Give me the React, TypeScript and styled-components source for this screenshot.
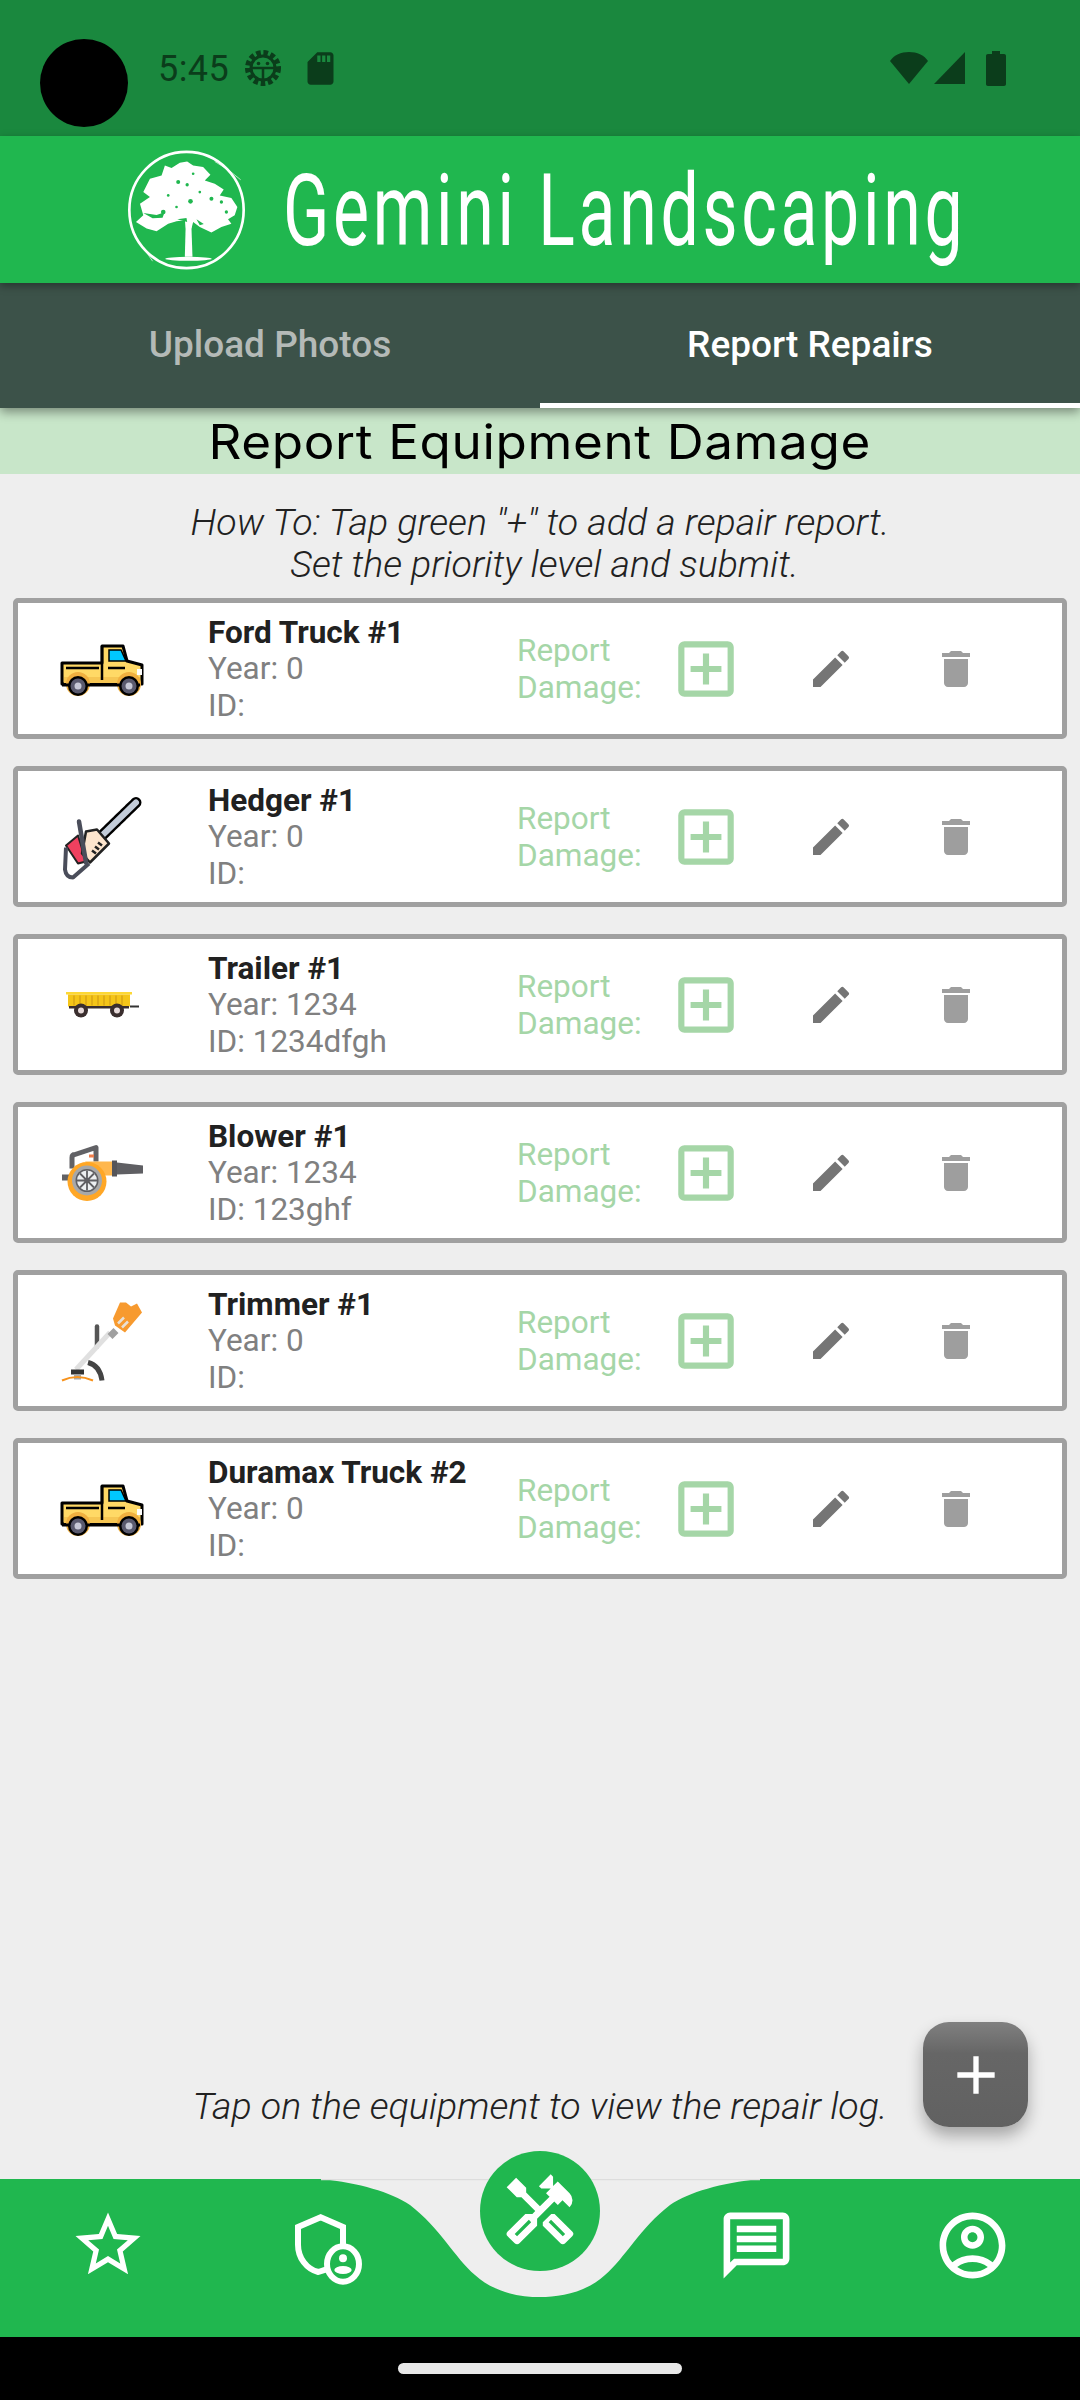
import styled, { createGlobalStyle } from "styled-components";
import {
  MdAdd,
  MdDelete,
  MdEdit,
  MdOutlineAccountCircle,
  MdOutlineAddBox,
  MdOutlineHandyman,
  MdOutlineMessage,
  MdSdCard,
  MdStarBorder,
} from "react-icons/md";

const GlobalStyle = createGlobalStyle`
  html, body {
    margin: 0;
    padding: 0;
    background: #eeeeee;
  }
  * {
    box-sizing: border-box;
  }
`;

const Screen = styled.div`
  position: relative;
  display: flex;
  flex-direction: column;
  width: 1080px;
  height: 2400px;
  overflow: hidden;
  background: #eeeeee;
  font-family: Roboto, "Liberation Sans", sans-serif;
`;

const StatusBar = styled.div`
  display: flex;
  align-items: center;
  flex: 0 0 136px;
  padding: 0 74px 0 40px;
  background: #1a883e;
  color: #0b3d1b;
`;

const Camera = styled.div`
  width: 88px;
  height: 88px;
  margin-top: 30px;
  border-radius: 50%;
  background: #000;
`;

const StatusLeft = styled.div`
  display: flex;
  align-items: center;
  margin-left: 30px;
`;

const Clock = styled.span`
  font-size: 36px;
  letter-spacing: 0.4px;
  margin: 2px 14px 0 0;
`;

const StatusRight = styled.div`
  display: flex;
  align-items: center;
  gap: 4px;
  margin-left: auto;
`;

const Header = styled.div`
  position: relative;
  z-index: 3;
  display: flex;
  align-items: center;
  flex: 0 0 147px;
  padding-left: 128px;
  background: #20b74f;
  box-shadow: 0 3px 8px rgba(0, 0, 0, 0.35);
`;

const Brand = styled.span`
  display: inline-block;
  margin: 2px 0 0 38px;
  color: #fff;
  font-size: 100px;
  font-weight: 400;
  line-height: 1;
  letter-spacing: 5.4px;
  white-space: nowrap;
  transform: scaleX(0.68);
  transform-origin: left center;
`;

const TabBar = styled.div`
  position: relative;
  z-index: 2;
  display: grid;
  grid-template-columns: 1fr 1fr;
  flex: 0 0 125px;
  background: #3c5249;
  box-shadow: 0 4px 10px rgba(0, 0, 0, 0.4);
`;

const Tab = styled.div<{ $active?: boolean }>`
  display: flex;
  align-items: center;
  justify-content: center;
  padding-top: 2px;
  font-size: 37px;
  font-weight: 500;
  color: ${(p) => (p.$active ? "#ffffff" : "#b4bab7")};
  border-bottom: 5px solid ${(p) => (p.$active ? "#ffffff" : "transparent")};
`;

const TitleBand = styled.div`
  display: flex;
  align-items: center;
  justify-content: center;
  flex: 0 0 66px;
  background: #c8e6c9;
`;

const TitleText = styled.span`
  display: inline-block;
  color: #000;
  font-family: Inter, sans-serif;
  font-size: 48px;
  font-weight: 400;
  letter-spacing: 0.6px;
  transform: scaleX(1.066);
`;

const HowTo = styled.p`
  margin: 0;
  padding: 27px 0 13px;
  text-align: center;
  color: #212121;
  font-size: 37.5px;
  font-style: italic;
  font-weight: 300;
  line-height: 42px;
`;

const EquipmentList = styled.div`
  display: flex;
  flex-direction: column;
  gap: 27px;
  margin: 0 13px;
`;

const Row = styled.div`
  display: flex;
  align-items: center;
  height: 141px;
  padding-left: 12px;
  background: #fff;
  border: 5px solid #a0a0a0;
  border-radius: 5px;
`;

const Thumb = styled.svg`
  flex: 0 0 150px;
  width: 150px;
  height: 110px;
`;

const Info = styled.div`
  flex: 0 0 309px;
  margin: 2px 0 0 28px;
  font-size: 31.5px;
  line-height: 36.5px;
  color: #808080;
`;

const Name = styled.div`
  color: #212121;
  font-weight: 700;
`;

const ReportLabel = styled.div`
  flex: 0 0 152px;
  margin-top: 2px;
  color: #a5d6a7;
  font-size: 31.5px;
  line-height: 36.5px;
`;

const IconSlot = styled.div<{ $left: number; $color: string }>`
  display: flex;
  margin-left: ${(p) => p.$left}px;
  color: ${(p) => p.$color};
`;

const Spacer = styled.div`
  flex: 1;
`;

const FooterHint = styled.p`
  margin: 0;
  padding-bottom: 52px;
  text-align: center;
  color: #212121;
  font-size: 37.5px;
  font-style: italic;
  font-weight: 300;
  line-height: 42px;
`;

const Fab = styled.div`
  position: absolute;
  left: 923px;
  top: 2022px;
  display: flex;
  align-items: center;
  justify-content: center;
  width: 105px;
  height: 105px;
  border-radius: 26px;
  background: linear-gradient(#808080 0%, #666666 30%, #616161 100%);
  color: #fff;
  box-shadow: 0 9px 16px rgba(0, 0, 0, 0.3);
`;

const BottomNav = styled.div`
  position: relative;
  display: grid;
  grid-template-columns: repeat(5, 1fr);
  flex: 0 0 158px;
  padding-top: 27px;
  background: #20b74f;
  color: #fff;
`;

const Notch = styled.svg`
  position: absolute;
  top: 0;
  left: 0;
  width: 1080px;
  height: 158px;
`;

const NavItem = styled.div`
  position: relative;
  display: flex;
  justify-content: center;
  align-items: flex-start;
  height: 80px;
`;

const CenterButton = styled.div`
  position: absolute;
  top: -55px;
  left: 48px;
  display: flex;
  align-items: center;
  justify-content: center;
  width: 120px;
  height: 120px;
  border-radius: 50%;
  background: #20b74f;
`;

const SystemBar = styled.div`
  display: flex;
  align-items: center;
  justify-content: center;
  flex: 0 0 63px;
  background: #000;
`;

const HomePill = styled.div`
  width: 284px;
  height: 11px;
  border-radius: 6px;
  background: #e8e8e8;
`;

const GearIcon = () => (
  <svg width="40" height="40" viewBox="0 0 40 40" fill="none" stroke="currentColor">
    <circle cx="20" cy="20" r="15.5" strokeWidth="5" strokeDasharray="4.6 2.7" />
    <circle cx="20" cy="20" r="12" strokeWidth="3" />
    <path d="M8 20h24M20 20v11" strokeWidth="2.5" />
    <circle cx="15.5" cy="15.5" r="1.8" fill="currentColor" stroke="none" />
    <circle cx="24.5" cy="15.5" r="1.8" fill="currentColor" stroke="none" />
  </svg>
);

const SignalIcons = () => (
  <>
    <svg width="40" height="34" viewBox="0 0 40 34" fill="currentColor">
      <path d="M20 33 1 10C5 4 12 1 20 1s15 3 19 9z" />
    </svg>
    <svg width="33" height="34" viewBox="0 0 33 34" fill="currentColor">
      <path d="M32 1v32H1z" />
    </svg>
    <svg width="20" height="35" viewBox="0 0 20 35" fill="currentColor" style={{ marginLeft: 16 }}>
      <path d="M6 0h8v3h4c1.200 0 2 .8 2 2v28c0 1.200-.8 2-2 2H2c-1.200 0-2-.8-2-2V5c0-1.200.8-2 2-2h4z" />
    </svg>
  </>
);

const TreeLogo = () => (
  <svg width="117" height="120" viewBox="84 54 352 360" style={{ flex: "0 0 117px" }}>
    <ellipse cx="260" cy="234" rx="172" ry="175" fill="none" stroke="#fff" strokeWidth="8" />
    <path d="M345 88q45 25 78 55M132 348q10 18 26 40" fill="none" stroke="#fff" strokeWidth="2" />
    <path
      fill="#fff"
      d="M195 100l20 8 25-16 22-4 18 12 30 5 22 23-17 17 30 10 27 17-12 18 35 8 18 27-8 25-20 12 10 13-30 10-30 17-35-17-20-15-5 20h-17l-3-25-25 3-25 7-35 23-30-8-32-20 22-20-10-35 30-20-20-15 20-40 35-10z"
    />
    <path fill="#fff" d="M258 262l-3 113h23l-4-113z" />
    <ellipse cx="266" cy="381" rx="70" ry="6" fill="#fff" />
    <g fill="#20b74f">
      <circle cx="235" cy="150" r="6" />
      <circle cx="262" cy="158" r="5" />
      <circle cx="205" cy="190" r="4" />
      <circle cx="300" cy="180" r="4" />
      <circle cx="335" cy="200" r="6" />
      <circle cx="272" cy="208" r="7" />
      <circle cx="230" cy="225" r="4" />
      <circle cx="365" cy="210" r="5" />
      <circle cx="380" cy="240" r="5" />
      <circle cx="190" cy="240" r="7" />
      <circle cx="280" cy="125" r="4" />
      <path d="M130 243l40 6 24-8-6 16-30 2zM232 262l28-4 2 12zM290 262l22 14-12 4z" />
    </g>
  </svg>
);

const TruckThumb = () => (
  <Thumb viewBox="0 0 150 110">
    <g transform="translate(0 -3)">
      <path d="M32 52h40V35h21l4 15 15 4v19H32z" fill="#ffd966" stroke="#000" strokeWidth="3" strokeLinejoin="round" />
      <path d="M34 66h76v6H34z" fill="#f6c653" />
      <path d="M79 39h12l5 11H79z" fill="#00c8ff" stroke="#000" strokeWidth="1.500" />
      <path d="M36 57h33M72 35v34M78 57h17" stroke="#000" strokeWidth="2.500" fill="none" />
      <rect x="107" y="58" width="5" height="6" fill="#fff" />
      <circle cx="48" cy="73" r="12" fill="#f0b040" />
      <circle cx="99" cy="73" r="12" fill="#f0b040" />
      <path d="M32 74h78" stroke="#000" strokeWidth="3" />
      <circle cx="48" cy="75" r="10" fill="#000" />
      <circle cx="48" cy="75" r="7.500" fill="#5a5a6e" />
      <circle cx="48" cy="75" r="3.500" fill="#c6c8d6" />
      <circle cx="99" cy="75" r="10" fill="#000" />
      <circle cx="99" cy="75" r="7.500" fill="#5a5a6e" />
      <circle cx="99" cy="75" r="3.500" fill="#c6c8d6" />
    </g>
  </Thumb>
);

const SawThumb = () => (
  <Thumb viewBox="0 0 150 110">
    <g transform="translate(0 -1.500)">
      <path d="M70 57 106 22" stroke="#000" strokeWidth="11" strokeLinecap="round" strokeDasharray="3 0.4" />
      <path d="M70 57 106 22" stroke="#c3ccd9" strokeWidth="6" strokeLinecap="round" />
      <path d="M36 65l12-10 8 26-8 2z" fill="#f0405f" stroke="#222" strokeWidth="2" strokeLinejoin="round" />
      <path d="M56 51l11-2 12 14-19 19-8-9z" fill="#fde5cd" stroke="#222" strokeWidth="2.500" strokeLinejoin="round" />
      <path d="M62 70l4 3M65 66l4 3M68 62l4 3" stroke="#222" strokeWidth="2.500" />
      <path d="M49 41l7 41" stroke="#4a4d5a" strokeWidth="4.500" strokeLinecap="round" />
      <path d="M36 67l-1 22q1 8 8 8l16-14" fill="none" stroke="#4a4d5a" strokeWidth="4" strokeLinejoin="round" />
    </g>
  </Thumb>
);

const TrailerThumb = () => (
  <Thumb viewBox="0 0 150 110">
    <g transform="translate(-30 -949.500)">
      <path d="M130 1006h9" stroke="#333" strokeWidth="2" />
      <rect x="66" y="991.500" width="66" height="2.500" fill="#fdd835" />
      <rect x="68" y="994" width="62" height="12" fill="#f5c518" />
      <path d="M74 995v10M80 995v10M86 995v10M92 995v10M98 995v10M104 995v10M110 995v10M116 995v10M122 995v10" stroke="#d9a514" strokeWidth="1.500" />
      <rect x="69" y="1005.500" width="60" height="2.500" fill="#3a2e2e" />
      <circle cx="81" cy="1010" r="7" fill="#3a2e2e" />
      <circle cx="81" cy="1010" r="3" fill="#e6d9d9" />
      <circle cx="117" cy="1010" r="7" fill="#3a2e2e" />
      <circle cx="117" cy="1010" r="3" fill="#e6d9d9" />
    </g>
  </Thumb>
);

const BlowerThumb = () => (
  <Thumb viewBox="0 0 150 110">
    <g transform="translate(0 2.500)">
      <path d="M42 48V37q0-3 3-3l21-7v14" fill="none" stroke="#616165" strokeWidth="5" strokeLinejoin="round" />
      <rect x="59" y="34" width="5" height="3" fill="#ef7d4b" />
      <rect x="32" y="54" width="7" height="6" fill="#616165" />
      <path d="M87 42l26 3v8l-26 1z" fill="#5f5f63" />
      <path d="M55 41h28v14H70z" fill="#ffb74d" />
      <rect x="82" y="40" width="5" height="16" fill="#55555a" />
      <circle cx="57" cy="61" r="19.500" fill="#ffa726" />
      <circle cx="57" cy="60" r="15" fill="#a8a8a8" />
      <circle cx="57" cy="60" r="11.500" fill="#5f5f63" />
      <circle cx="57" cy="60" r="10" fill="#eceff1" />
      <path d="M57 50v20M47 60h20M50 53l14 14M64 53 50 67" stroke="#5f5f63" strokeWidth="1.800" />
      <circle cx="57" cy="60" r="2.500" fill="#5f5f63" />
    </g>
  </Thumb>
);

const TrimmerThumb = () => (
  <Thumb viewBox="0 0 150 110">
    <g transform="translate(0 4.500)">
      <path d="M67 36v20" stroke="#555" strokeWidth="4.500" strokeLinecap="round" />
      <path d="M58 72q12 3 14 18" fill="none" stroke="#444" strokeWidth="5" />
      <path d="M46 79 80 42" stroke="#e0e0e0" strokeWidth="5" />
      <path d="M80 46l6-6" stroke="#a0a0a0" strokeWidth="7" />
      <path d="M90 12h6l5 4 6-3 5 9-17 20-10-7-2-7z" fill="#f79a2f" />
      <path d="M88 33l6-6M92 37l6-6" stroke="#e8e0d5" strokeWidth="2.500" />
      <rect x="41" y="79" width="13" height="5" fill="#333" />
      <rect x="44" y="84" width="7" height="5" fill="#a8a8a8" />
      <path d="M32 90q15-7 31 0" fill="none" stroke="#f7931e" strokeWidth="2" />
    </g>
  </Thumb>
);

const ShieldPersonIcon = () => (
  <svg width="80" height="80" viewBox="0 0 24 24" fill="none" stroke="#fff" strokeWidth="1.800">
    <path d="M17.700 11.500V6.300L11 3.400 4.200 6.300v5.300c0 4 2.600 7.300 6.100 8.200l2.200-.7" />
    <ellipse cx="17.700" cy="17.400" rx="4.800" ry="5.300" fill="#20b74f" />
    <circle cx="17.700" cy="15.700" r="1.200" fill="#fff" stroke="none" />
    <ellipse cx="17.700" cy="19.200" rx="2.600" ry="1.200" fill="#fff" stroke="none" />
  </svg>
);

const equipment = [
  { name: "Ford Truck #1", year: "0", id: "", thumb: <TruckThumb /> },
  { name: "Hedger #1", year: "0", id: "", thumb: <SawThumb /> },
  { name: "Trailer #1", year: "1234", id: "1234dfgh", thumb: <TrailerThumb /> },
  { name: "Blower #1", year: "1234", id: "123ghf", thumb: <BlowerThumb /> },
  { name: "Trimmer #1", year: "0", id: "", thumb: <TrimmerThumb /> },
  { name: "Duramax Truck #2", year: "0", id: "", thumb: <TruckThumb /> },
];

const App = () => {
  return (
    <Screen>
      <GlobalStyle />
      <StatusBar>
        <Camera />
        <StatusLeft>
          <Clock>5:45</Clock>
          <GearIcon />
          <MdSdCard size={39} style={{ marginLeft: 18 }} />
        </StatusLeft>
        <StatusRight>
          <SignalIcons />
        </StatusRight>
      </StatusBar>
      <Header>
        <TreeLogo />
        <Brand>Gemini Landscaping</Brand>
      </Header>
      <TabBar>
        <Tab>Upload Photos</Tab>
        <Tab $active>Report Repairs</Tab>
      </TabBar>
      <TitleBand>
        <TitleText>Report Equipment Damage</TitleText>
      </TitleBand>
      <HowTo>
        How To: Tap green "+" to add a repair report.
        <br />
        {"\u00a0"}Set the priority level and submit.
      </HowTo>
      <EquipmentList>
        {equipment.map((item) => (
          <Row key={item.name}>
            {item.thumb}
            <Info>
              <Name>{item.name}</Name>
              <div>Year: {item.year}</div>
              <div>ID: {item.id}</div>
            </Info>
            <ReportLabel>
              Report
              <br />
              Damage:
            </ReportLabel>
            <IconSlot $left={0} $color="#a5d6a7">
              <MdOutlineAddBox size={74} />
            </IconSlot>
            <IconSlot $left={64} $color="#757575">
              <MdEdit size={48} />
            </IconSlot>
            <IconSlot $left={77} $color="#9e9e9e">
              <MdDelete size={48} />
            </IconSlot>
          </Row>
        ))}
      </EquipmentList>
      <Spacer />
      <FooterHint>Tap on the equipment to view the repair log.</FooterHint>
      <Fab>
        <MdAdd size={64} />
      </Fab>
      <BottomNav>
        <Notch viewBox="0 0 1080 158">
          <path
            fill="#eeeeee"
            d="M321 0C360 4 390 13 410 26C440 49 455 79 475 96C495 114 520 118 540 118C560 118 585 114 605 96C625 79 640 49 670 26C690 13 720 4 760 0Z"
          />
          <path d="M321 .5H760" stroke="#dddddd" strokeWidth="1.500" />
        </Notch>
        <NavItem>
          <MdStarBorder size={78} />
        </NavItem>
        <NavItem>
          <ShieldPersonIcon />
        </NavItem>
        <NavItem>
          <CenterButton>
            <MdOutlineHandyman size={80} />
          </CenterButton>
        </NavItem>
        <NavItem>
          <MdOutlineMessage size={79} />
        </NavItem>
        <NavItem>
          <MdOutlineAccountCircle size={79} />
        </NavItem>
      </BottomNav>
      <SystemBar>
        <HomePill />
      </SystemBar>
    </Screen>
  );
};

export default App;
